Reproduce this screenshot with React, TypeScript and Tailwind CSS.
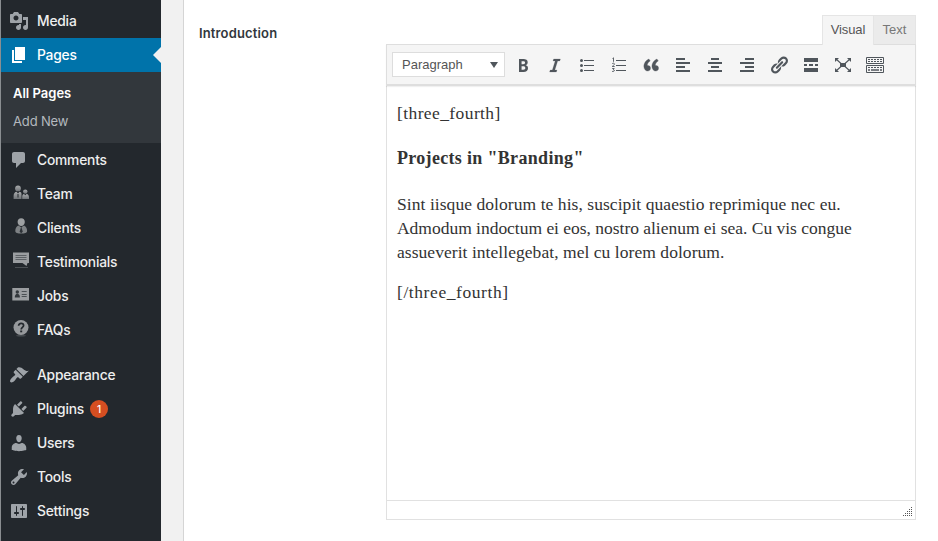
import type { ReactNode } from "react";

const SANS = "font-['Inter','Liberation_Sans',sans-serif]";

function Glyph({ d, className = "" }: { d: string; className?: string }) {
  return (
    <svg viewBox="0 0 20 20" className={"h-5 w-5 shrink-0 " + className} fill="currentColor" fillRule="evenodd">
      <path d={d} />
    </svg>
  );
}

const media =
  "M13 11V4c0-.55-.45-1-1-1h-1.67L9 1H5L3.67 3H2c-.55 0-1 .45-1 1v7c0 .55.45 1 1 1h10c.55 0 1-.45 1-1zM7 4.5c1.38 0 2.5 1.12 2.5 2.5S8.38 9.5 7 9.5 4.5 8.38 4.5 7 5.62 4.5 7 4.5zM14 6h5v10.5c0 1.38-1.12 2.5-2.5 2.5S14 17.88 14 16.5s1.12-2.5 2.5-2.5c.17 0 .34.02.5.05V9h-3V6zm-4 8.05V13h2v3.5c0 1.38-1.12 2.5-2.5 2.5S7 17.88 7 16.5 8.12 14 9.5 14c.17 0 .34.02.5.05z";
const page = "M6 15V2h10v13H6zm-1 1h8v2H3V5h2v11z";
const comments = "M5 2h9c1.1 0 2 .9 2 2v7c0 1.1-.9 2-2 2h-2l-5 5v-5H5c-1.1 0-2-.9-2-2V4c0-1.1.9-2 2-2z";
const appearance =
  "M14.48 11.06L7.41 3.99l1.5-1.5c.5-.56 2.3-.47 3.51.32 1.21.8 1.43 1.28 2.91 2.1 1.18.64 2.45 1.26 4.45.85zm-.71.71L6.7 4.7 4.93 6.47c-.39.39-.39 1.02 0 1.41l1.06 1.06c.39.39.39 1.03 0 1.42-.6.6-1.43 1.11-2.21 1.69-.35.26-.7.53-1.01.84C1.43 14.23.4 16.08 1.4 17.07c.99 1 2.84-.03 4.18-1.36.31-.31.58-.66.85-1.02.57-.78 1.08-1.61 1.69-2.21.39-.39 1.02-.39 1.41 0l1.06 1.06c.39.39 1.02.39 1.41 0z";
const plugins =
  "M13.11 4.36L9.87 7.6 8 5.73l3.24-3.24c.35-.34 1.05-.2 1.56.32.52.51.66 1.21.31 1.55zm-8 1.77l.91-1.12 9.01 9.01-1.19.84c-.71.71-2.63 1.16-3.82 1.16H6.14L4.9 17.26c-.59.59-1.54.59-2.12 0-.59-.58-.59-1.53 0-2.12l1.24-1.24v-3.88c0-1.13.4-3.19 1.09-3.89zm7.26 3.97l3.24-3.24c.34-.35 1.04-.21 1.55.31.52.51.66 1.21.31 1.55l-3.24 3.25z";
const users =
  "M10 9.25c-2.27 0-2.73-3.44-2.73-3.44C7 4.02 7.82 2 9.97 2c2.16 0 2.98 2.02 2.71 3.81 0 0-.41 3.44-2.68 3.44zm0 1.75L12.72 10c2.39 0 4.52 2.33 4.52 4.53v2.49s-3.65 1.13-7.24 1.13c-3.65 0-7.24-1.13-7.24-1.13v-2.49c0-2.25 1.94-4.48 4.47-4.48z";
const tools =
  "M16.68 9.77c-1.34 1.34-3.3 1.67-4.95.99l-5.41 6.52c-.99.99-2.59.99-3.58 0s-.99-2.59 0-3.57l6.52-5.42c-.68-1.65-.35-3.61.99-4.95 1.28-1.28 3.12-1.62 4.72-1.06l-2.89 2.89 2.82 2.82 2.86-2.87c.53 1.58.18 3.39-1.08 4.65zM3.81 16.21c.4.39 1.04.39 1.43 0 .4-.4.4-1.04 0-1.43-.39-.4-1.03-.4-1.43 0-.39.39-.39 1.03 0 1.43z";
const settings =
  "M18 16V4c0-.55-.45-1-1-1H3c-.55 0-1 .45-1 1v12c0 .55.45 1 1 1h14c.55 0 1-.45 1-1zM8 11h1c.55 0 1 .45 1 1s-.45 1-1 1H8v1.5c0 .28-.22.5-.5.5s-.5-.22-.5-.5V13H6c-.55 0-1-.45-1-1s.45-1 1-1h1V5.5c0-.28.22-.5.5-.5s.5.22.5.5V11zm5-2h-1c-.55 0-1-.45-1-1s.45-1 1-1h1V5.5c0-.28.22-.5.5-.5s.5.22.5.5V7h1c.55 0 1 .45 1 1s-.45 1-1 1h-1v5.5c0 .28-.22.5-.5.5s-.5-.22-.5-.5V9z";

const bold =
  "M6 4v13h4.54c1.37 0 2.46-.33 3.26-1 .8-.66 1.2-1.58 1.2-2.77 0-.84-.17-1.51-.51-2.01s-.9-.85-1.67-1.03v-.09c.57-.1 1.02-.4 1.36-.9s.51-1.13.51-1.91c0-1.14-.39-1.98-1.17-2.5C12.75 4.26 11.5 4 9.78 4H6zm2.57 5.15V6.26h1.36c.73 0 1.27.11 1.61.32.34.22.51.58.51 1.07 0 .54-.16.92-.47 1.15s-.82.35-1.51.35h-1.5zm0 2.19h1.6c1.44 0 2.16.53 2.16 1.61 0 .6-.17 1.05-.51 1.34s-.86.43-1.57.43H8.57v-3.38z";
const italic = "M14.78 6h-2.13l-2.8 9h2.12l-.62 2H4.6l.62-2h2.14l2.8-9H8.03l.62-2h6.75z";
const quote =
  "M9.49 13.22c0-.74-.2-1.38-.61-1.9-.62-.78-1.83-.88-2.53-.72-.29-1.65 1.11-3.75 2.92-4.65L7.88 4c-2.73 1.3-5.42 4.28-4.96 8.05C3.21 14.43 4.59 16 6.54 16c.85 0 1.56-.25 2.12-.75s.83-1.18.83-2.03zm8.05 0c0-.74-.2-1.38-.61-1.9-.63-.78-1.83-.88-2.53-.72-.29-1.65 1.11-3.75 2.92-4.65L15.93 4c-2.73 1.3-5.41 4.28-4.95 8.05.29 2.38 1.66 3.95 3.61 3.95.85 0 1.56-.25 2.12-.75s.83-1.18.83-2.03z";
const alignLeft = "M12 5V3H3v2h9zm5 4V7H3v2h14zm-5 4v-2H3v2h9zm5 4v-2H3v2h14z";
const alignCenter = "M14 5V3H6v2h8zm3 4V7H3v2h14zm-3 4v-2H6v2h8zm3 4v-2H3v2h14z";
const alignRight = "M17 5V3H8v2h9zm0 4V7H3v2h14zm0 4v-2H8v2h9zm0 4v-2H3v2h14z";
const link =
  "M17.74 2.76c1.68 1.69 1.68 4.41 0 6.1l-1.53 1.52c-1.12 1.12-2.7 1.47-4.14 1.09l2.62-2.61.76-.77.76-.76c.84-.84.84-2.2 0-3.04-.84-.85-2.2-.85-3.04 0l-.77.76-3.38 3.38c-.37-1.44-.02-3.02 1.1-4.14l1.52-1.53c1.69-1.68 4.42-1.68 6.1 0zM8.59 13.43l5.34-5.34c.42-.42.42-1.1 0-1.52-.44-.43-1.13-.39-1.53 0l-5.33 5.34c-.42.42-.42 1.1 0 1.52.44.43 1.13.39 1.52 0zm-.76 2.29l4.14-4.15c.38 1.44.03 3.02-1.09 4.14l-1.52 1.53c-1.69 1.68-4.41 1.68-6.1 0-1.68-1.68-1.68-4.42 0-6.1l1.53-1.52c1.12-1.12 2.7-1.47 4.14-1.1l-4.14 4.15c-.85.84-.85 2.2 0 3.05.84.84 2.2.84 3.04 0z";
const more = "M17 7V3H3v4h14zM6 11V9H3v2h3zm6 0V9H8v2h4zm5 0V9h-3v2h3zm0 6v-4H3v4h14z";

function Shade() {
  return (
    <defs>
      <linearGradient id="shade" x1="0" y1="0" x2="0" y2="1">
        <stop offset="0" stopColor="#a9abad" />
        <stop offset="1" stopColor="#6f7377" />
      </linearGradient>
    </defs>
  );
}

function TeamIcon() {
  return (
    <svg viewBox="0 0 20 20" className="h-5 w-5 shrink-0">
      <Shade />
      <g fill="url(#shade)">
        <circle cx="9" cy="4.4" r="2.9" />
        <path d="M4.600 15v-3c0-2.800 1.400-4 2.900-4.200L9 9.600l1.500-1.800c1.400.2 2 .9 2 2.200V15z" />
        <circle cx="16.300" cy="7.600" r="2.200" />
        <path d="M13.200 15v-2.200c0-1.700.8-2.600 1.800-2.800l1.300 1.300 1.300-1.300c1.400.2 2.400 1.400 2.400 3v2z" />
      </g>
      <path d="M9 10v3.500" stroke="#23282d" strokeWidth="1" />
    </svg>
  );
}

function ClientIcon() {
  return (
    <svg viewBox="0 0 20 20" className="h-5 w-5 shrink-0">
      <path d="M12.200 .2c2.300 0 3.600 1.600 3.600 3.700S14.300 8 12.200 8 8.600 6 8.600 3.900 9.900.2 12.200.2z" fill="#9da0a2" />
      <path d="M9.300 7.400l2.900 1.800 2.900-1.800c2.100.9 3 3.300 3 5.500 0 1.900-2.600 2.600-5.900 2.600s-5.900-.7-5.900-2.600c0-2.200.9-4.600 3-5.500z" fill="#7d8184" />
      <path d="M12.200 8.500l1.600 5.300-1.600 1.400-1.600-1.400z" fill="#2d3237" />
    </svg>
  );
}

function TestimonialIcon() {
  return (
    <svg viewBox="0 0 20 20" className="h-5 w-5 shrink-0">
      <path d="M4 .500h16v10.500h-1.500L17.500 14 13.500 11H4z" fill="#9a9da0" />
      <path d="M6.500 3.500h11M6.500 5.500h11M6.500 7.500h11" stroke="#5c6165" strokeWidth="1" />
      <path d="M6 15.500h13" stroke="#4b5054" strokeWidth="1" />
    </svg>
  );
}

function JobIcon() {
  return (
    <svg viewBox="0 0 20 20" className="h-5 w-5 shrink-0">
      <path d="M3.300 2h17v12.500h-17z" fill="#9a9da0" />
      <circle cx="8.300" cy="6" r="1.700" fill="#33383c" />
      <path d="M5.800 11.600c0-2.600 1-3.800 2.500-3.800s2.600 1.200 2.600 3.800z" fill="#33383c" />
      <path d="M12.700 5.500h5M12.700 8.500h5M12.700 10.500h5" stroke="#4b5054" strokeWidth="1" />
    </svg>
  );
}

function FaqIcon() {
  return (
    <svg viewBox="0 0 20 20" className="h-5 w-5 shrink-0">
      <ellipse cx="12" cy="15.800" rx="5" ry=".8" fill="#4b5054" />
      <circle cx="12" cy="7.500" r="7.500" fill="#96999c" />
      <path d="M9.600 5.800c0-1.500 1-2.500 2.500-2.500s2.500.9 2.500 2.200c0 1.900-2.400 1.900-2.400 4" fill="none" stroke="#23282d" strokeWidth="1.700" />
      <path d="M11.200 10.500h2v1.800h-2z" fill="#23282d" />
    </svg>
  );
}

function MenuRow({ icon, label, active = false, badge }: { icon: ReactNode; label: string; active?: boolean; badge?: string }) {
  return (
    <li className={"relative flex h-[34px] items-center pl-2 " + (active ? "bg-[#0073aa] text-white" : "text-[#eee]")}>
      <span className={active ? "text-white" : "text-[#9ea3a8]"}>{icon}</span>
      <span className="ml-2 text-[13.8px] leading-5 font-medium tracking-[-0.2px]">{label}</span>
      {badge && (
        <span className="ml-1.5 flex h-[18px] w-[18px] items-center justify-center rounded-full bg-[#d54e21] text-[10px] font-medium text-white">{badge}</span>
      )}
      {active && <span className="absolute top-[9px] right-0 h-0 w-0 border-y-8 border-r-8 border-y-transparent border-r-[#f1f1f1]" />}
    </li>
  );
}

function Sidebar() {
  return (
    <nav className="flex w-[161px] shrink-0 flex-col border-l border-[#8a8e91] bg-[#23282d] pt-1">
      <ul>
        <MenuRow icon={<Glyph d={media} />} label="Media" />
        <MenuRow icon={<Glyph d={page} />} label="Pages" active />
      </ul>
      <ul className="h-[71px] bg-[#32373c] pt-2 pl-3 text-[13px]">
        <li className="flex h-7 items-center font-semibold text-white">All Pages</li>
        <li className="flex h-7 items-center tracking-[-0.15px] text-[#b4b9be]">Add New</li>
      </ul>
      <ul>
        <MenuRow icon={<Glyph d={comments} />} label="Comments" />
        <MenuRow icon={<TeamIcon />} label="Team" />
        <MenuRow icon={<ClientIcon />} label="Clients" />
        <MenuRow icon={<TestimonialIcon />} label="Testimonials" />
        <MenuRow icon={<JobIcon />} label="Jobs" />
        <MenuRow icon={<FaqIcon />} label="FAQs" />
      </ul>
      <ul className="mt-[11px]">
        <MenuRow icon={<Glyph d={appearance} />} label="Appearance" />
        <MenuRow icon={<Glyph d={plugins} />} label="Plugins" badge="1" />
        <MenuRow icon={<Glyph d={users} />} label="Users" />
        <MenuRow icon={<Glyph d={tools} />} label="Tools" />
        <MenuRow icon={<Glyph d={settings} />} label="Settings" />
      </ul>
    </nav>
  );
}

function BulletList() {
  return (
    <svg viewBox="0 0 20 20" className="h-5 w-5" fill="currentColor">
      <circle cx="4.500" cy="5.500" r="1.500" />
      <circle cx="4.500" cy="10.500" r="1.500" />
      <circle cx="4.500" cy="15.500" r="1.500" />
      <path d="M7 5h10v1H7zM7 10h10v1H7zM7 15h10v1H7z" />
    </svg>
  );
}

function NumberList() {
  return (
    <svg viewBox="0 0 20 20" className="h-5 w-5" fill="none" stroke="currentColor">
      <path d="M3.500 3.500l1-.7v4M3.200 8.700c.8-.9 2.300-.6 2.200.4 0 .8-1.400 1.500-2.200 2.400h2.500M3.200 13.500h2l-1 1.300c1.900-.1 1.600 2.200-1.100 1.600" strokeWidth=".9" />
      <path d="M7 5.500h10M7 10.500h10M7 15.500h10" />
    </svg>
  );
}

function Expand() {
  return (
    <svg viewBox="0 0 20 20" className="h-5 w-5" fill="currentColor">
      <path d="M7 8h6v4H7z" />
      <path d="M2 3h4L2 7zM18 3v4l-4-4zM2 17v-4l4 4zM18 17h-4l4-4z" />
      <path d="M3 4l5 4.500M17 4l-5 4.500M3 16l5-4.500M17 16l-5-4.500" stroke="currentColor" strokeWidth="1.100" />
    </svg>
  );
}

function KitchenSink() {
  return (
    <svg viewBox="0 0 20 20" className="h-5 w-5" fill="none" stroke="currentColor">
      <path d="M1.500 2.500h17v6h-17zM1.500 10.500h17v7h-17z" />
      <path d="M3 4.500h14M3 6.500h14M3 12.500h14" strokeDasharray="2 1" />
      <path d="M3 15h2M6 15h8M15 15h2" strokeWidth="1.500" />
    </svg>
  );
}

function Toolbar() {
  return (
    <div className="z-10 flex h-[42px] items-center border border-b-2 border-[#dedede] bg-[#f5f5f5] pl-[5px] text-[#50565c] shadow-[0_1px_1px_rgba(0,0,0,0.06)]">
      <div className="flex h-[25px] w-[113px] items-center justify-between border border-[#ddd] bg-white pr-1.5 pl-[9px] text-[13px] text-[#555]">
        <span>Paragraph</span>
        <span className="h-0 w-0 border-x-4 border-t-[6px] border-x-transparent border-t-[#50565c]" />
      </div>
      <div className="ml-2 flex gap-3">
        <Glyph d={bold} />
        <Glyph d={italic} className="stroke-current stroke-[0.2]" />
        <BulletList />
        <NumberList />
        <Glyph d={quote} className="stroke-current stroke-[0.3]" />
        <Glyph d={alignLeft} />
        <Glyph d={alignCenter} />
        <Glyph d={alignRight} />
        <Glyph d={link} />
        <Glyph d={more} />
        <Expand />
        <KitchenSink />
      </div>
    </div>
  );
}

function ResizeGrip() {
  return (
    <svg viewBox="0 0 10 10" className="h-2.5 w-2.5" fill="#555">
      <path d="M8 0h1v1H8zM6 2h1v1H6zM8 2h1v1H8zM4 4h1v1H4zM6 4h1v1H6zM8 4h1v1H8zM2 6h1v1H2zM4 6h1v1H4zM6 6h1v1H6zM8 6h1v1H8zM0 8h1v1H0zM2 8h1v1H2zM4 8h1v1H4zM6 8h1v1H6zM8 8h1v1H8z" />
    </svg>
  );
}

function Editor() {
  return (
    <section className="mt-[15px] flex w-[530px] flex-col font-['Liberation_Sans',Arial,sans-serif]">
      <div className="z-20 -mb-px flex h-[30px] justify-end text-[13px]">
        <div className="flex w-[52px] justify-center border border-b-0 border-[#e5e5e5] bg-[#f5f5f5] pt-1 tracking-[-0.1px] text-[#555]">Visual</div>
        <div className="mb-px flex w-[42px] justify-center border border-b-0 border-l-0 border-[#e5e5e5] bg-[#ebebeb] pt-1 text-[#777]">Text</div>
      </div>
      <Toolbar />
      <div className="h-[414px] border-x border-[#e1e1e1] bg-white pt-[15px] pl-2.5 font-['Liberation_Serif','Times_New_Roman',serif] text-[17.5px] leading-6 whitespace-nowrap text-[#333]">
        <p className="tracking-[0.4px]">[three_fourth]</p>
        <h3 className="mt-[21px] text-[18px] font-bold tracking-[0.32px]">Projects in "Branding"</h3>
        <p className="mt-[22px]">
          <span className="block tracking-[0.06px]">Sint iisque dolorum te his, suscipit quaestio reprimique nec eu.</span>
          <span className="block tracking-[-0.02px]">Admodum indoctum ei eos, nostro alienum ei sea. Cu vis congue</span>
          <span className="block tracking-[0.05px]">assueverit intellegebat, mel cu lorem dolorum.</span>
        </p>
        <p className="mt-4 tracking-[0.58px]">[/three_fourth]</p>
      </div>
      <div className="flex h-5 items-end justify-end border border-[#e1e1e1] bg-white pr-[2px] pb-[2px]">
        <ResizeGrip />
      </div>
    </section>
  );
}

export default function App() {
  return (
    <div className={"flex h-[541px] w-[938px] overflow-hidden bg-[#f1f1f1] " + SANS}>
      <Sidebar />
      <main className="ml-[22px] flex h-full flex-1 items-start border-l border-[#d5d5d5] bg-white pl-[15px]">
        <h2 className="mt-[23px] w-[187px] text-[13px] leading-5 font-semibold tracking-[0.15px] text-[#32373c]">Introduction</h2>
        <Editor />
      </main>
    </div>
  );
}
